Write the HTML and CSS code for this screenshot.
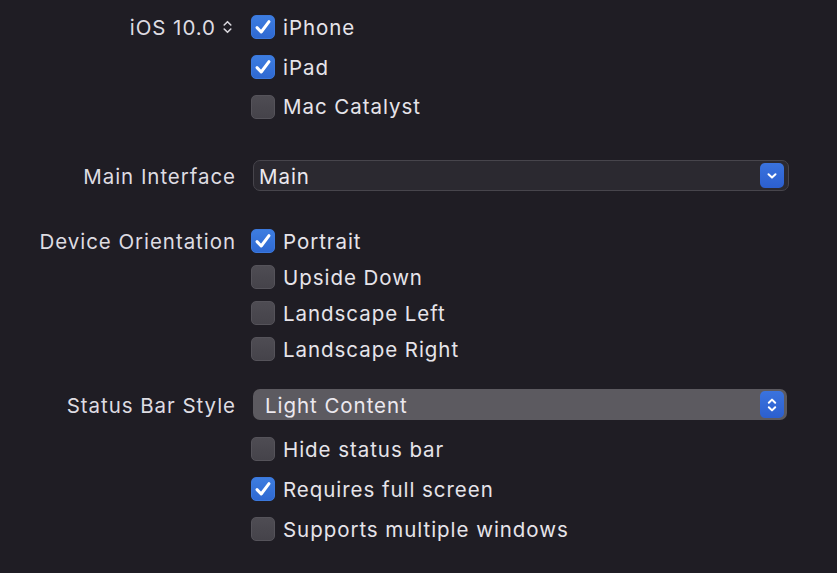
FILE: index.html
```html
<!DOCTYPE html>
<html>
<head>
<meta charset="utf-8">
<link rel="stylesheet" href="styles.css">
</head>
<body>
<div class="form">
  <section class="section s-deploy">
    <div class="label label-row40">iOS 10.0 <svg class="updown" width="11" height="16" viewBox="0 0 11 16"><path d="M2.2 6 L5.5 2.7 L8.8 6 M2.2 10 L5.5 13.3 L8.8 10" fill="none" stroke="#d8d6dc" stroke-width="1.6" stroke-linecap="round" stroke-linejoin="round"/></svg></div>
    <div class="options">
      <label class="opt h40"><span class="cb on"><svg viewBox="0 0 24 24" width="24" height="24"><path d="M6 12.6 L10.2 17 L18 6.6" fill="none" stroke="#fff" stroke-width="3" stroke-linecap="round" stroke-linejoin="round"/></svg></span>iPhone</label>
      <label class="opt h40"><span class="cb on"><svg viewBox="0 0 24 24" width="24" height="24"><path d="M6 12.6 L10.2 17 L18 6.6" fill="none" stroke="#fff" stroke-width="3" stroke-linecap="round" stroke-linejoin="round"/></svg></span>iPad</label>
      <label class="opt h39"><span class="cb"></span>Mac Catalyst</label>
    </div>
  </section>

  <section class="section s-main">
    <div class="label label-row31">Main Interface</div>
    <div class="options">
      <div class="popup dark">
        <span class="popup-text">Main</span>
        <span class="popup-btn"><svg width="12" height="8" viewBox="0 0 12 8"><path d="M2.5 2.3 L6 5.6 L9.5 2.3" fill="none" stroke="#fff" stroke-width="2" stroke-linecap="round" stroke-linejoin="round"/></svg></span>
      </div>
    </div>
  </section>

  <section class="section s-orient">
    <div class="label label-row36">Device Orientation</div>
    <div class="options">
      <label class="opt h36"><span class="cb on"><svg viewBox="0 0 24 24" width="24" height="24"><path d="M6 12.6 L10.2 17 L18 6.6" fill="none" stroke="#fff" stroke-width="3" stroke-linecap="round" stroke-linejoin="round"/></svg></span>Portrait</label>
      <label class="opt h36"><span class="cb"></span>Upside Down</label>
      <label class="opt h36"><span class="cb"></span>Landscape Left</label>
      <label class="opt h36"><span class="cb"></span>Landscape Right</label>
    </div>
  </section>

  <section class="section s-status">
    <div class="label label-row31">Status Bar Style</div>
    <div class="options">
      <div class="popup light">
        <span class="popup-text">Light Content</span>
        <span class="popup-btn"><svg width="12" height="18" viewBox="0 0 12 18"><path d="M2.8 6.8 L6 3.6 L9.2 6.8 M2.8 11.2 L6 14.4 L9.2 11.2" fill="none" stroke="#fff" stroke-width="2" stroke-linecap="round" stroke-linejoin="round"/></svg></span>
      </div>
      <div class="sub-options">
        <label class="opt h40"><span class="cb"></span>Hide status bar</label>
        <label class="opt h40"><span class="cb on"><svg viewBox="0 0 24 24" width="24" height="24"><path d="M6 12.6 L10.2 17 L18 6.6" fill="none" stroke="#fff" stroke-width="3" stroke-linecap="round" stroke-linejoin="round"/></svg></span>Requires full screen</label>
        <label class="opt h40"><span class="cb"></span>Supports multiple windows</label>
      </div>
    </div>
  </section>
</div>
</body>
</html>
```
FILE: styles.css
```css
html, body {
  margin: 0;
  padding: 0;
  background: #1f1d24;
  height: 100%;
}
body {
  font-family: Inter, "Noto Sans", "Liberation Sans", sans-serif;
  font-size: 20.5px;
  letter-spacing: 0.95px;
  color: #e4e2e7;
  overflow: hidden;
}
.form {
  padding-top: 7px;
}
.section {
  display: grid;
  grid-template-columns: 235px 1fr;
  column-gap: 16px;
  align-items: start;
}
.s-main { margin-top: 34px; }
.s-orient { margin-top: 32px; }
.s-status { margin-top: 22px; }

.label {
  display: flex;
  align-items: center;
  justify-content: flex-end;
  color: #dedce2;
  white-space: nowrap;
  margin-right: -1px;
}
.label-row40 { height: 40px; padding-right: 3px; }
.label-row31 { height: 31px; padding-top: 2px; box-sizing: border-box; }
.label-row36 { height: 36px; }
.updown { margin-left: 6px; }

.options {
  display: flex;
  flex-direction: column;
}
.opt {
  display: flex;
  align-items: center;
  gap: 8px;
  color: #e6e4ea;
  white-space: nowrap;
}
.h40 { height: 40px; }
.h39 { height: 39px; }
.h36 { height: 36px; }

.cb {
  width: 24px;
  height: 24px;
  box-sizing: border-box;
  border-radius: 5px;
  background: linear-gradient(#4e4c53, #45434a);
  border: 1px solid #55535a;
  flex: none;
  display: flex;
}
.cb.on {
  background: linear-gradient(#3d7de0, #2f69d2);
  border-color: #3b78dc;
}
.cb.on svg { margin: -1px; }

.popup {
  margin-left: 2px;
  height: 31px;
  box-sizing: border-box;
  border-radius: 7px;
  display: flex;
  align-items: center;
  justify-content: space-between;
}
.popup.dark {
  width: 536px;
  background: #2b2930;
  border: 1px solid #47454c;
  padding: 0 4px 0 5px;
}
.popup.light {
  width: 534px;
  background: #5c5a60;
  padding: 0 3px 0 12px;
}
.popup-text {
  color: #ece9ef;
  padding-top: 2px;
}
.popup-btn {
  width: 24px;
  height: 25px;
  border-radius: 5px;
  background: linear-gradient(#3a73de, #2c5fcf);
  display: flex;
  align-items: center;
  justify-content: center;
}
.popup.light .popup-btn { height: 27px; }
.sub-options {
  margin-top: 9px;
  display: flex;
  flex-direction: column;
}
```
